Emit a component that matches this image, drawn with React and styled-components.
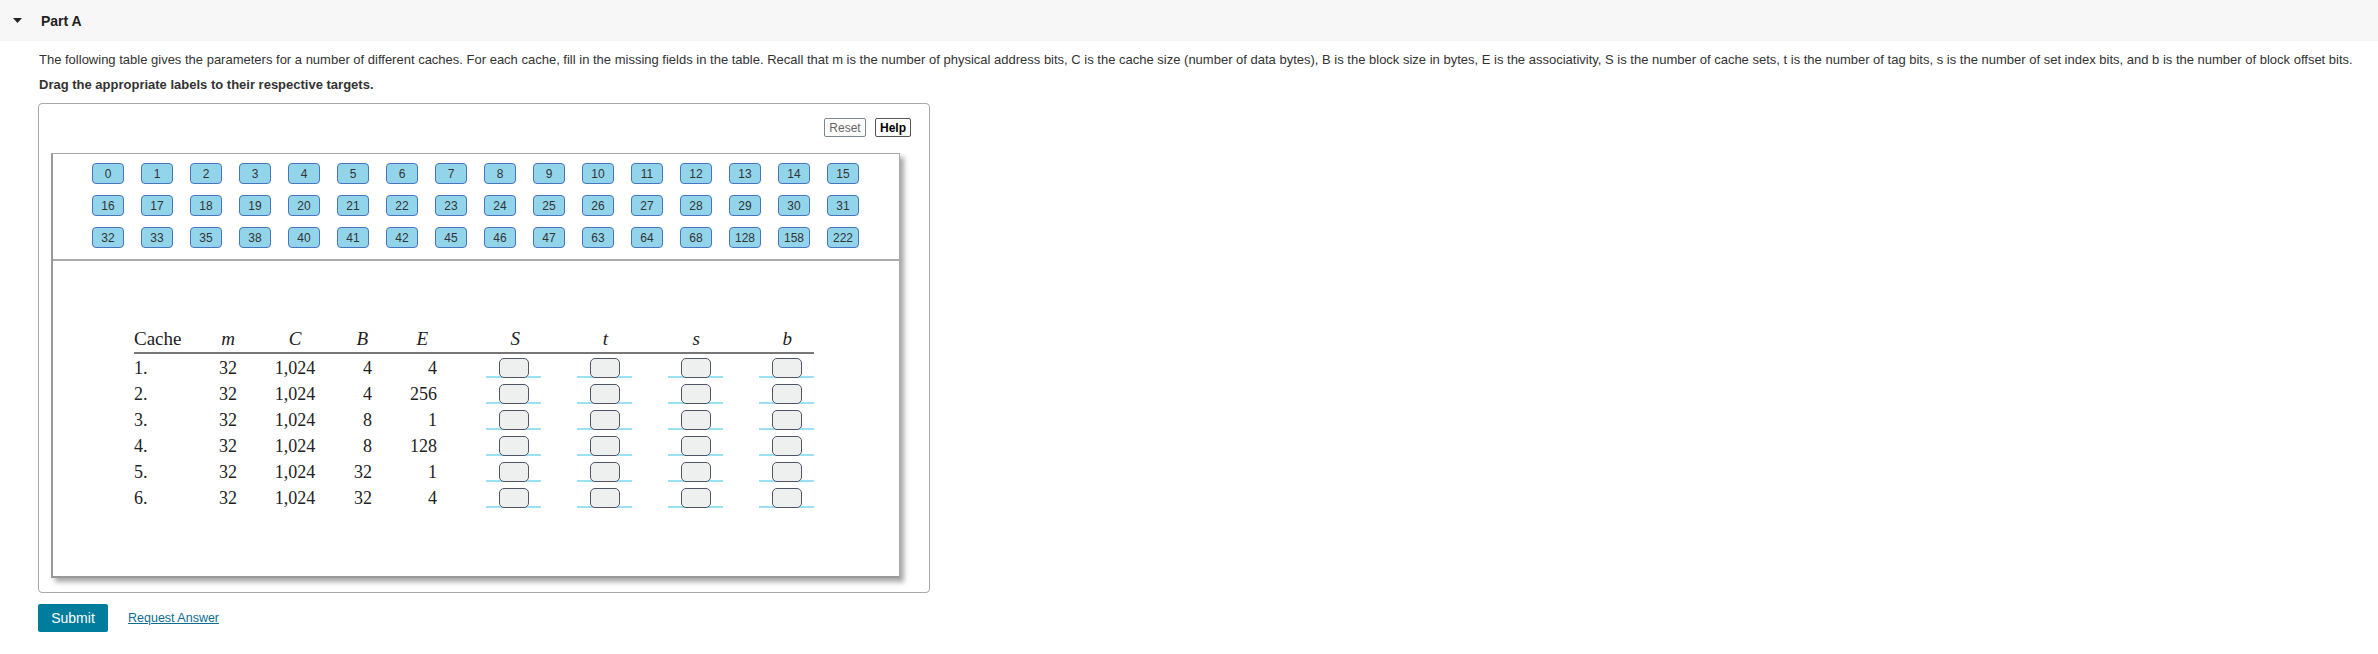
import React from 'react';
import styled, { createGlobalStyle } from 'styled-components';

const GlobalStyle = createGlobalStyle`
  body {
    margin: 0;
    background: #fff;
    font-family: 'Liberation Sans', Arial, sans-serif;
    color: #333;
  }
`;

const tiles = [
  [0, 1, 2, 3, 4, 5, 6, 7, 8, 9, 10, 11, 12, 13, 14, 15],
  [16, 17, 18, 19, 20, 21, 22, 23, 24, 25, 26, 27, 28, 29, 30, 31],
  [32, 33, 35, 38, 40, 41, 42, 45, 46, 47, 63, 64, 68, 128, 158, 222],
];

const rows = [
  ['1.', 32, '1,024', 4, 4],
  ['2.', 32, '1,024', 4, 256],
  ['3.', 32, '1,024', 8, 1],
  ['4.', 32, '1,024', 8, 128],
  ['5.', 32, '1,024', 32, 1],
  ['6.', 32, '1,024', 32, 4],
];

const Header = styled.div`
  display: flex;
  align-items: center;
  gap: 19px;
  height: 41px;
  padding-left: 13px;
  background: #f7f7f7;
`;

const PartTitle = styled.span`
  font-size: 14px;
  font-weight: bold;
  color: #222;
`;

const Content = styled.div`
  padding: 0 38px;
`;

const Para = styled.p`
  margin: ${(p) => (p.$first ? '11px' : '10px')} 0 0 1px;
  font-size: 13px;
  line-height: 15px;
  font-weight: ${(p) => (p.$bold ? 'bold' : 'normal')};
  color: #333;
  white-space: nowrap;
`;

const Box = styled.div`
  margin-top: 11px;
  width: 892px;
  height: 490px;
  box-sizing: border-box;
  border: 1px solid #aaa;
  border-radius: 4px;
  padding: 14px 18px 0 12px;
`;

const Tools = styled.div`
  display: flex;
  justify-content: flex-end;
  gap: 9px;
`;

const ToolButton = styled.button`
  height: 19px;
  padding: 0 4px;
  background: #fff;
  border: 1px solid ${(p) => (p.$strong ? '#555' : '#7a8790')};
  border-radius: 2px;
  font-family: 'Liberation Sans', Arial, sans-serif;
  font-size: 12px;
  font-weight: ${(p) => (p.$strong ? 'bold' : 'normal')};
  color: ${(p) => (p.$strong ? '#000' : '#666')};
  width: ${(p) => p.$w}px;
`;

const Panel = styled.div`
  margin-top: 16px;
  width: 849px;
  height: 425px;
  box-sizing: border-box;
  border: 1px solid #aaa;
  border-left: 2px solid #999;
  border-bottom: 2px solid #999;
  box-shadow: 4px 4px 5px rgba(0, 0, 0, 0.35);
  display: flex;
  flex-direction: column;
`;

const TileArea = styled.div`
  display: flex;
  flex-direction: column;
  gap: 11px;
  padding: 9px 0 11px 39px;
  border-bottom: 2px solid #aaa;
`;

const TileRow = styled.div`
  display: flex;
  gap: 17px;
`;

const Tile = styled.div`
  width: 30px;
  height: 19px;
  border: 1px solid #4775c0;
  border-radius: 4px;
  background: #92d5eb;
  display: flex;
  align-items: center;
  justify-content: center;
  font-size: 12px;
  color: #333;
`;

const TableArea = styled.div`
  padding: 67px 0 0 81px;
`;

const Grid = styled.div`
  display: grid;
  grid-template-columns: 60px 68px 66px 44px 78px 91px 91px 91px 91px;
  width: 680px;
  font-family: 'Liberation Serif', 'Times New Roman', serif;
  color: #222;
`;

const Head = styled.div`
  font-size: 19px;
  line-height: 22px;
  padding-bottom: 2px;
  border-bottom: 2px solid #777;
  text-align: ${(p) => p.$align || 'center'};
  padding-right: ${(p) => p.$pr || 0}px;
  font-style: ${(p) => (p.$italic ? 'italic' : 'normal')};
`;

const Cell = styled.div`
  height: 26px;
  box-sizing: border-box;
  padding-top: 3px;
  font-size: 18px;
  line-height: 23px;
  text-align: ${(p) => p.$align || 'center'};
  padding-right: ${(p) => p.$pr || 0}px;
`;

const Slot = styled.div`
  height: 26px;
  display: flex;
  justify-content: flex-end;
`;

const SlotLine = styled.div`
  width: 55px;
  height: 24px;
  box-sizing: border-box;
  padding-top: 4px;
  display: flex;
  justify-content: center;
  background: linear-gradient(#98e2f4, #98e2f4) bottom / 100% 2px no-repeat;
`;

const Blank = styled.div`
  width: 30px;
  height: 20px;
  box-sizing: border-box;
  border: 1.5px solid #4f5466;
  border-radius: 5px;
  background: #eef0ef;
`;

const Actions = styled.div`
  display: flex;
  align-items: center;
  gap: 20px;
  margin-top: 11px;
`;

const Submit = styled.button`
  width: 70px;
  height: 28px;
  border: none;
  border-radius: 2px;
  background: #007c9c;
  color: #fff;
  font-family: 'Liberation Sans', Arial, sans-serif;
  font-size: 14px;
`;

const RequestLink = styled.a`
  font-size: 12.5px;
  color: #0b6e91;
  text-decoration: underline;
  cursor: pointer;
`;

const App = () => (
  <>
    <GlobalStyle />
    <Header>
      <svg width="9" height="5" viewBox="0 0 9 5">
        <path d="M0 0 L9 0 L4.5 5 Z" fill="#222" />
      </svg>
      <PartTitle>Part A</PartTitle>
    </Header>
    <Content>
      <Para $first>
        The following table gives the parameters for a number of different caches. For each cache, fill in the missing fields in the table. Recall that m is the number of physical address bits, C is the cache size (number of data bytes), B is the block size in bytes, E is the associativity, S is the number of cache sets, t is the number of tag bits, s is the number of set index bits, and b is the number of block offset bits.
      </Para>
      <Para $bold>Drag the appropriate labels to their respective targets.</Para>
      <Box>
        <Tools>
          <ToolButton $w={42}>Reset</ToolButton>
          <ToolButton $w={36} $strong>Help</ToolButton>
        </Tools>
        <Panel>
          <TileArea>
            {tiles.map((row, i) => (
              <TileRow key={i}>
                {row.map((n) => (
                  <Tile key={n}>{n}</Tile>
                ))}
              </TileRow>
            ))}
          </TileArea>
          <TableArea>
            <Grid>
              <Head $align="left">Cache</Head>
              <Head $italic>m</Head>
              <Head $italic>C</Head>
              <Head $italic $align="right" $pr={4}>B</Head>
              <Head $italic $align="right" $pr={22}>E</Head>
              <Head $italic $align="right" $pr={21}>S</Head>
              <Head $italic $align="right" $pr={24}>t</Head>
              <Head $italic $align="right" $pr={23}>s</Head>
              <Head $italic $align="right" $pr={22}>b</Head>
              {rows.map((r) => (
                <React.Fragment key={r[0]}>
                  <Cell $align="left">{r[0]}</Cell>
                  <Cell>{r[1]}</Cell>
                  <Cell>{r[2]}</Cell>
                  <Cell $align="right">{r[3]}</Cell>
                  <Cell $align="right" $pr={13}>{r[4]}</Cell>
                  {[0, 1, 2, 3].map((k) => (
                    <Slot key={k}>
                      <SlotLine>
                        <Blank />
                      </SlotLine>
                    </Slot>
                  ))}
                </React.Fragment>
              ))}
            </Grid>
          </TableArea>
        </Panel>
      </Box>
      <Actions>
        <Submit>Submit</Submit>
        <RequestLink>Request Answer</RequestLink>
      </Actions>
    </Content>
  </>
);

export default App;
